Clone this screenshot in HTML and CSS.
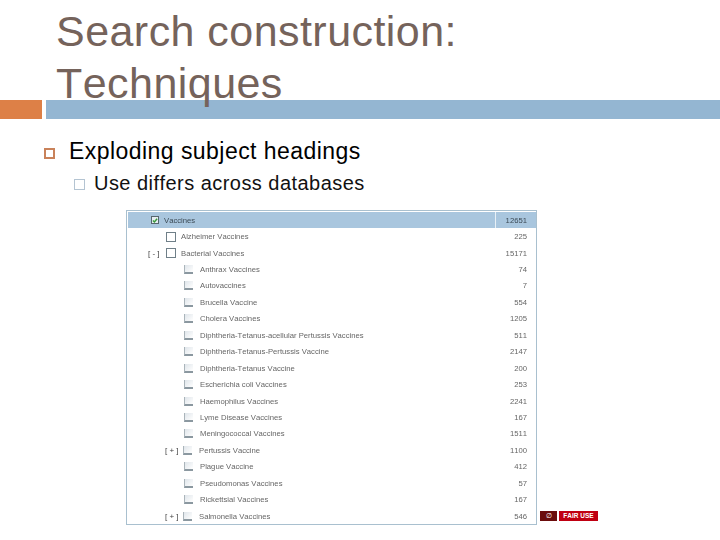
FILE: index.html
```html
<!DOCTYPE html>
<html lang="en">
<head>
<meta charset="utf-8">
<title>Search construction: Techniques</title>
<link rel="stylesheet" href="styles.css">
</head>
<body>
<h1 class="title">Search construction:<br>Techniques</h1>
<div class="rule"><span class="rule-a"></span><span class="rule-b"></span></div>
<div class="bullets">
  <div class="b1"><span class="mark1"></span><span class="btext">Exploding subject headings</span></div>
  <div class="b2"><span class="mark2"></span><span class="btext">Use differs across databases</span></div>
</div>
<div class="shot-row">
  <div class="tree">
    <div class="row head"><span class="cell-name l0"><i class="cb on"><svg viewBox="0 0 10 10" width="7" height="7"><path d="M1.5 5l2.5 2.5L8.5 2" fill="none" stroke="#3a9a3a" stroke-width="2.4"/></svg></i><b>Vaccines</b></span><span class="num">12651</span></div>
    <div class="row"><span class="cell-name l1"><i class="cb"></i><b>Alzheimer Vaccines</b></span><span class="num">225</span></div>
    <div class="row"><span class="cell-name l1 tog"><u>[ - ]</u><i class="cb"></i><b>Bacterial Vaccines</b></span><span class="num">15171</span></div>
    <div class="row"><span class="cell-name l2"><i class="cb s"></i><b>Anthrax Vaccines</b></span><span class="num">74</span></div>
    <div class="row"><span class="cell-name l2"><i class="cb s"></i><b>Autovaccines</b></span><span class="num">7</span></div>
    <div class="row"><span class="cell-name l2"><i class="cb s"></i><b>Brucella Vaccine</b></span><span class="num">554</span></div>
    <div class="row"><span class="cell-name l2"><i class="cb s"></i><b>Cholera Vaccines</b></span><span class="num">1205</span></div>
    <div class="row"><span class="cell-name l2"><i class="cb s"></i><b>Diphtheria-Tetanus-acellular Pertussis Vaccines</b></span><span class="num">511</span></div>
    <div class="row"><span class="cell-name l2"><i class="cb s"></i><b>Diphtheria-Tetanus-Pertussis Vaccine</b></span><span class="num">2147</span></div>
    <div class="row"><span class="cell-name l2"><i class="cb s"></i><b>Diphtheria-Tetanus Vaccine</b></span><span class="num">200</span></div>
    <div class="row"><span class="cell-name l2"><i class="cb s"></i><b>Escherichia coli Vaccines</b></span><span class="num">253</span></div>
    <div class="row"><span class="cell-name l2"><i class="cb s"></i><b>Haemophilus Vaccines</b></span><span class="num">2241</span></div>
    <div class="row"><span class="cell-name l2"><i class="cb s"></i><b>Lyme Disease Vaccines</b></span><span class="num">167</span></div>
    <div class="row"><span class="cell-name l2"><i class="cb s"></i><b>Meningococcal Vaccines</b></span><span class="num">1511</span></div>
    <div class="row"><span class="cell-name l2 tog"><u>[ + ]</u><i class="cb s"></i><b>Pertussis Vaccine</b></span><span class="num">1100</span></div>
    <div class="row"><span class="cell-name l2"><i class="cb s"></i><b>Plague Vaccine</b></span><span class="num">412</span></div>
    <div class="row"><span class="cell-name l2"><i class="cb s"></i><b>Pseudomonas Vaccines</b></span><span class="num">57</span></div>
    <div class="row"><span class="cell-name l2"><i class="cb s"></i><b>Rickettsial Vaccines</b></span><span class="num">167</span></div>
    <div class="row"><span class="cell-name l2 tog"><u>[ + ]</u><i class="cb s"></i><b>Salmonella Vaccines</b></span><span class="num">546</span></div>
  </div>
  <div class="badge"><span class="badge-icon">&#8709;</span><span class="badge-text">FAIR USE</span></div>
</div>
</body>
</html>
```
FILE: styles.css
```css
* { box-sizing: border-box; }
html, body { margin: 0; padding: 0; }
body {
  width: 720px;
  height: 540px;
  overflow: hidden;
  background: #fff;
  font-family: "Liberation Sans", Arial, sans-serif;
  font-kerning: none;
}
.title {
  position: relative;
  z-index: 1;
  height: 100px;
  margin: 0;
  padding: 5px 0 0 56px;
  font-size: 43px;
  font-weight: 400;
  line-height: 52px;
  letter-spacing: .45px;
  color: #75635b;
}
.rule { display: flex; gap: 4px; height: 19px; }
.rule-a { width: 42px; background: #dd8047; }
.rule-b { flex: 1; background: #94b6d2; }
.bullets { padding-top: 19px; color: #000; }
.btext { padding-bottom: 3px; }
.b1 {
  display: flex;
  align-items: center;
  gap: 14px;
  height: 30px;
  padding-left: 44px;
  font-size: 23px;
  letter-spacing: .45px;
}
.mark1 { width: 11px; height: 11px; border: 2px solid #c9825a; background: #fff; }
.b2 {
  display: flex;
  align-items: center;
  gap: 9px;
  height: 33px;
  padding-left: 74px;
  font-size: 20px;
  letter-spacing: .46px;
  color: #111;
}
.mark2 { width: 11px; height: 11px; border: 1px solid #b4c4d2; background: #fff; }
.shot-row {
  display: flex;
  align-items: flex-end;
  gap: 3px;
  padding: 9px 0 0 126px;
}
.tree {
  width: 411px;
  height: 315px;
  padding: 1px 0 0 1px;
  border: 1px solid #a9c0cf;
  overflow: hidden;
}
.row {
  display: flex;
  align-items: center;
  height: 16.44px;
  color: #666;
  font-size: 7.7px;
}
.row.head { background: #a9c6de; color: #3c4a55; }
.cell-name {
  flex: 1;
  display: flex;
  align-items: center;
  height: 100%;
  min-width: 0;
  white-space: nowrap;
}
.head .cell-name { border-right: 1px solid #e8f0f6; }
.l0 { padding-left: 23px; }
.l1 { padding-left: 38px; }
.l2 { padding-left: 56px; }
.l1.tog { padding-left: 20px; }
.l2.tog { padding-left: 37px; }
.cell-name b { font-weight: 400; filter: blur(.5px); }
.cell-name u {
  width: 18px;
  text-decoration: none;
  font-size: 8px;
  color: #444;
  white-space: pre;
  filter: blur(.3px);
}
.cb {
  flex: none;
  width: 10px;
  height: 10px;
  margin-right: 5px;
  border: 1px solid #6f7f88;
  background: #fff;
  display: flex;
  align-items: center;
  justify-content: center;
}
.cb.on { width: 8px; height: 8px; margin-right: 5px; background: #e6eef2; border-color: #56666e; }
.cb.s {
  width: 9px;
  height: 9px;
  margin-right: 7px;
  border: 0;
  border-left: 1px solid #aab4ba;
  border-bottom: 2px solid #8b98a0;
  background: linear-gradient(135deg, #dfe5ea, #fff);
}
.num {
  flex: none;
  width: 40px;
  padding-right: 9px;
  text-align: right;
  filter: blur(.5px);
}
.badge {
  display: flex;
  gap: 2px;
  height: 10px;
  width: 58px;
  margin-bottom: 4px;
  color: #fff;
  font-size: 6.5px;
  line-height: 10px;
}
.badge-icon { width: 17px; background: #6b0c0c; text-align: center; }
.badge-text { flex: 1; background: #c00012; text-align: center; font-weight: 700; }
```
